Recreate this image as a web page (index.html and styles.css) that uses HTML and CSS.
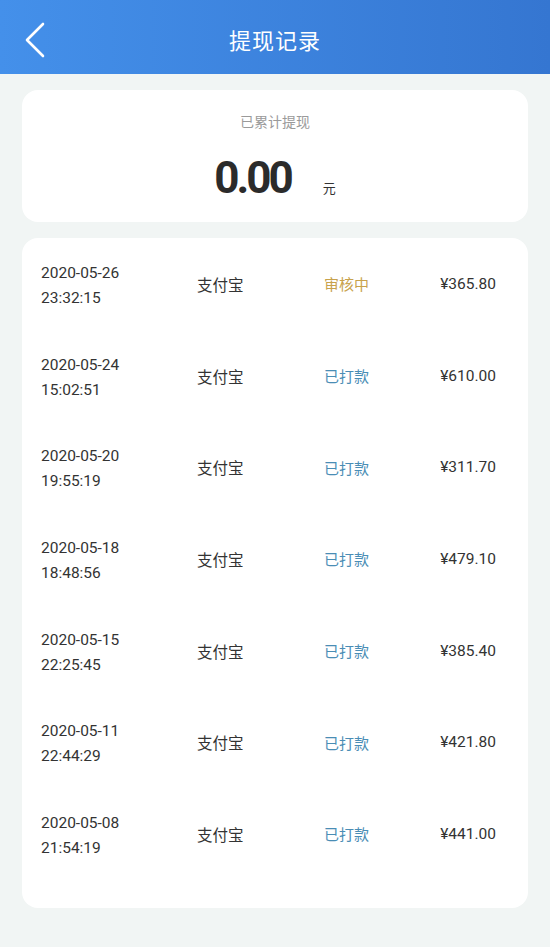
FILE: index.html
```html
<!DOCTYPE html>
<html lang="zh-CN">

<head>
    <meta charset="UTF-8">
    <meta name="viewport" content="width=device-width, initial-scale=1.0">
    <title>提现记录</title>
    <link rel="stylesheet" href="styles.css">
</head>

<body>
    <header class="topbar">
        <a href="#" class="back">
            <svg width="24" height="36" viewBox="0 0 24 36">
                <polyline points="20,2 4,18 20,34" fill="none" stroke="#fff" stroke-width="2.6" stroke-linecap="round" stroke-linejoin="round"/>
            </svg>
        </a>
        <h1>提现记录</h1>
    </header>

    <main class="page">
        <section class="card summary">
            <p class="summary-label">已累计提现</p>
            <div class="summary-total">
                <span class="total">0.00</span>
                <span class="unit">元</span>
            </div>
        </section>

        <section class="card records">
            <div class="row">
                <div class="date">2020-05-26<br>23:32:15</div>
                <div class="channel">支付宝</div>
                <div class="status pending">审核中</div>
                <div class="amount">¥365.80</div>
            </div>
            <div class="row">
                <div class="date">2020-05-24<br>15:02:51</div>
                <div class="channel">支付宝</div>
                <div class="status paid">已打款</div>
                <div class="amount">¥610.00</div>
            </div>
            <div class="row">
                <div class="date">2020-05-20<br>19:55:19</div>
                <div class="channel">支付宝</div>
                <div class="status paid">已打款</div>
                <div class="amount">¥311.70</div>
            </div>
            <div class="row">
                <div class="date">2020-05-18<br>18:48:56</div>
                <div class="channel">支付宝</div>
                <div class="status paid">已打款</div>
                <div class="amount">¥479.10</div>
            </div>
            <div class="row">
                <div class="date">2020-05-15<br>22:25:45</div>
                <div class="channel">支付宝</div>
                <div class="status paid">已打款</div>
                <div class="amount">¥385.40</div>
            </div>
            <div class="row">
                <div class="date">2020-05-11<br>22:44:29</div>
                <div class="channel">支付宝</div>
                <div class="status paid">已打款</div>
                <div class="amount">¥421.80</div>
            </div>
            <div class="row">
                <div class="date">2020-05-08<br>21:54:19</div>
                <div class="channel">支付宝</div>
                <div class="status paid">已打款</div>
                <div class="amount">¥441.00</div>
            </div>
        </section>
    </main>
</body>

</html>
```

FILE: styles.css
```css
* {
    margin: 0;
    padding: 0;
    box-sizing: border-box;
    font-family: Roboto, "Noto Sans CJK SC", sans-serif;
}

body {
    background-color: #f1f5f4;
    width: 550px;
    height: 947px;
    overflow: hidden;
}

.topbar {
    height: 74px;
    background: linear-gradient(to right, #4490ea, #3576d1);
    display: flex;
    align-items: center;
    justify-content: center;
    position: relative;
    padding-top: 3px;
}

.back {
    position: absolute;
    left: 23px;
    top: 22px;
    display: flex;
}

.topbar h1 {
    color: #fff;
    font-size: 22px;
    font-weight: 400;
    letter-spacing: 1px;
}

.page {
    padding: 16px 22px 0;
    display: flex;
    flex-direction: column;
    gap: 16px;
}

.card {
    background-color: #fff;
    border-radius: 16px;
}

.summary {
    height: 132px;
    display: flex;
    flex-direction: column;
    align-items: center;
    padding-top: 21px;
}

.summary-label {
    color: #9a9a9a;
    font-size: 14px;
}

.summary-total {
    display: flex;
    align-items: baseline;
    gap: 32px;
    margin-top: 21px;
}

.total {
    font-size: 44px;
    font-weight: 700;
    color: #2b2b2b;
    letter-spacing: -3px;
}

.unit {
    font-size: 13px;
    color: #333;
}

.records {
    height: 670px;
    overflow: hidden;
}

.row {
    height: 91.7px;
    display: grid;
    grid-template-columns: 156px 127px 1fr auto;
    align-items: center;
    padding: 0 32px 0 19px;
    font-size: 15.5px;
    color: #333;
}

.date {
    line-height: 25px;
    padding-top: 4px;
}

.status {
    font-size: 15px;
}

.pending {
    color: #c8a24c;
}

.paid {
    color: #4a8db5;
}

.amount {
    text-align: right;
}
```
